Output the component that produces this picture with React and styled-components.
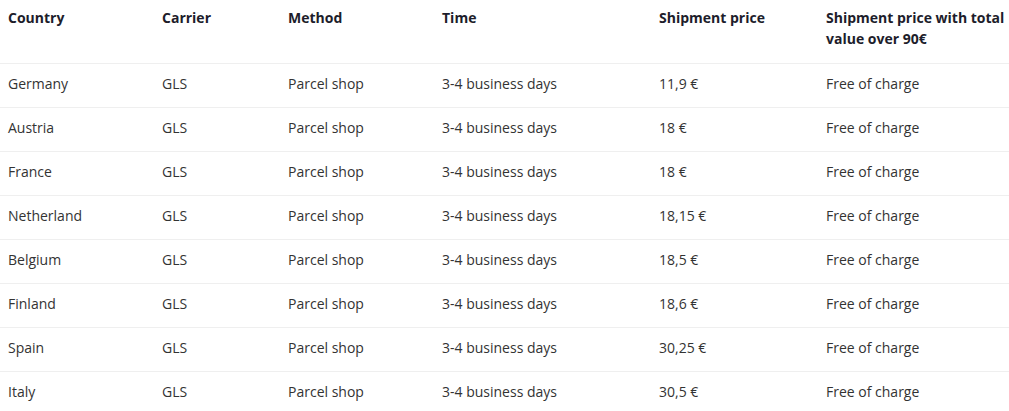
import styled, { createGlobalStyle } from 'styled-components'

const rows = [
  ['Germany', '11,9 €'],
  ['Austria', '18 €'],
  ['France', '18 €'],
  ['Netherland', '18,15 €'],
  ['Belgium', '18,5 €'],
  ['Finland', '18,6 €'],
  ['Spain', '30,25 €'],
  ['Italy', '30,5 €'],
]

const widths = [154, 126, 154, 217, 167, 191]

const App = () => {
  return (
    <>
      <GlobalStyle />
      <ShippingTable>
        <colgroup>
          {widths.map((w, i) => (
            <col key={i} style={{ width: w }} />
          ))}
        </colgroup>
        <thead>
          <tr>
            <HeadCell>Country</HeadCell>
            <HeadCell>Carrier</HeadCell>
            <HeadCell>Method</HeadCell>
            <HeadCell>Time</HeadCell>
            <HeadCell>Shipment price</HeadCell>
            <HeadCell>Shipment price with total value over 90€</HeadCell>
          </tr>
        </thead>
        <tbody>
          {rows.map(([country, price]) => (
            <Row key={country}>
              <Cell>{country}</Cell>
              <Cell>GLS</Cell>
              <Cell>Parcel shop</Cell>
              <Cell>3-4 business days</Cell>
              <Cell>{price}</Cell>
              <Cell>Free of charge</Cell>
            </Row>
          ))}
        </tbody>
      </ShippingTable>
    </>
  )
}

const GlobalStyle = createGlobalStyle`
  body {
    margin: 0;
    background: #fff;
    font-family: "Open Sans", "Noto Sans", sans-serif;
  }
`

const ShippingTable = styled.table`
  width: 1009px;
  table-layout: fixed;
  border-collapse: collapse;
  font-size: 14px;
  line-height: 21px;
  text-align: left;
`

const HeadCell = styled.th`
  padding: 7px 2px 14px 8px;
  font-weight: 700;
  color: #1d1d2b;
  vertical-align: top;
  border-bottom: 1px solid #efefef;
`

const Row = styled.tr`
  border-bottom: 1px solid #efefef;
`

const Cell = styled.td`
  padding: 9px 2px 13px 8px;
  color: #333;
  white-space: nowrap;
`

export default App
